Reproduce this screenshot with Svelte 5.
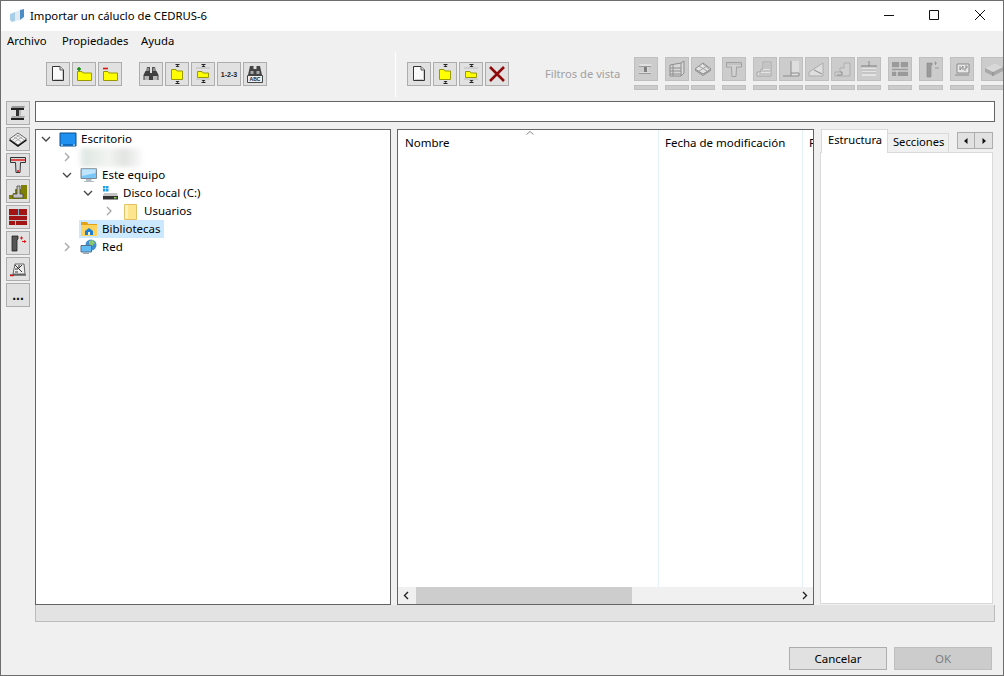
<script>
  const treeRows = [
    { label: "Escritorio", level: 0, open: true, icon: "desktop" },
    { label: "", level: 1, closed: true, icon: "blur" },
    { label: "Este equipo", level: 1, open: true, icon: "pc" },
    { label: "Disco local (C:)", level: 2, open: true, icon: "disk" },
    { label: "Usuarios", level: 3, closed: true, icon: "folder" },
    { label: "Bibliotecas", level: 1, icon: "library", selected: true },
    { label: "Red", level: 1, closed: true, icon: "network" }
  ]

  // grouped the way the disabled view filters sit in the toolbar
  const filterGroups = [
    ["beamOff"],
    ["frame", "slab"],
    ["tee"],
    ["stairs", "wall", "ramp", "step", "layers"],
    ["bricks"],
    ["column"],
    ["detail"],
    ["block"]
  ]
</script>

{#snippet yellowFolder(x, y, w, h)}
  <path d="M{x + 0.5} {y + h - 0.5}V{y + 0.5}H{x + 5}l1 1.5H{x + w - 0.5}V{y + h - 0.5}Z" fill="#ffff00" stroke="#9a9a00" />
{/snippet}

{#snippet page()}
  <path d="M5.5 3.5H13L16.5 7V17.5H5.5Z" fill="#fafafa" stroke="#333" />
  <path d="M13 3.5V7H16.5" fill="#ddd" stroke="#555" />
  <path d="M7 16.5H15.5V8" fill="none" stroke="#ccc" />
{/snippet}

{#snippet binoculars()}
  <path d="M6 9L7 4H10V9ZM12 9V4H15L16 9Z" fill="#555" />
  <path d="M3.5 17V12L5.5 8H10V10H12V8H16.5L18.5 12V17Z" fill="#3f3f3f" />
  <path d="M4.5 13H9V17H4.500ZM13 13H17.500V17H13Z" fill="#b5b5b5" />
  <path d="M7 5H9V8H7ZM13 5H15V8H13Z" fill="#8a8a8a" />
{/snippet}

{#snippet arrowsV(top, bottom)}
  <path d="M9.500 {top + 0.5}H13.500M9.500 {bottom - 0.5}H13.500" stroke="#222" fill="none" />
  <path d="M9.500 {top + 3}H13.500L11.500 {top + 1}Z" fill="#222" />
  <path d="M9.500 {bottom - 3}H13.500L11.500 {bottom - 1}Z" fill="#222" />
{/snippet}

{#snippet glyph(name)}
  <svg class="glyph" width="22" height="22" viewBox="0 0 22 22">
    {#if name === "beam"}
      <path d="M5 4H18L17 6H4Z" fill="#999" />
      <path d="M4 6H17V8H4Z" fill="#222" />
      <path d="M9 8H12V14H9Z" fill="#333" />
      <path d="M12 8H14V13.500H12Z" fill="#bbb" />
      <path d="M5 14H18L17 16H4Z" fill="#aaa" />
      <path d="M4 16H17V18H4Z" fill="#222" />
    {:else if name === "beamOff"}
      <path d="M5 6H17L16 8H4Z" fill="#e0e0e0" />
      <path d="M4 8H16V9H4Z" fill="#9a9a9a" />
      <path d="M9 9H12V14H9Z" fill="#7e7e7e" />
      <path d="M12 9H13.500V13H12Z" fill="#dadada" />
      <path d="M5 14H17L16 15H4Z" fill="#dcdcdc" />
      <path d="M4 15H16V16H4Z" fill="#9a9a9a" />
    {:else if name === "plate"}
      <path d="M2.500 11L11 5L19.500 11L11 17Z" fill="#f4f4f4" stroke="#666" />
      <path d="M6.500 8.500L14.500 14M9 6.500L17 12M13 6.500L5 12.500M15.500 8.500L7.500 14" stroke="#aaa" fill="none" />
      <path d="M2.500 12L11 18L19.500 12" stroke="#111" stroke-width="1.500" fill="none" />
    {:else if name === "teeRed"}
      <path d="M3.500 3.500H18.500V8.500H13.500L13 18.500H9L8.500 8.500H3.500Z" fill="#d8d8d8" stroke="#333" />
      <path d="M4 6H18" stroke="#e01010" stroke-width="1.400" />
      <path d="M10 17H12" stroke="#e01010" stroke-width="1.400" />
    {:else if name === "footing"}
      <path d="M2 19V15H6V13H8V9H14V5H20V19Z" fill="#808000" />
      <path d="M10 6H13V14H16V18H6V14H10Z" fill="#c4c4c4" stroke="#444" stroke-width="0.800" />
    {:else if name === "brick"}
      <path d="M2 3H20V19H2Z" fill="#a31414" />
      <path d="M2 9.500H20M2 14.500H20M8.500 14.500V19" stroke="#b8c4c8" fill="none" />
      <path d="M11.500 3V9" stroke="#7fb0c8" />
    {:else if name === "colRed"}
      <path d="M5 4H11V7L10 8V19H5Z" fill="#555" stroke="#222" stroke-width="0.800" />
      <path d="M13 6H16M14.500 4.500V7.500M15 9.500H19" stroke="#e01010" fill="none" />
      <path d="M17 8L19.500 9.500L17 11Z" fill="#e01010" />
    {:else if name === "slope"}
      <path d="M6 16L8 6H17L18 16Z" fill="#eee" stroke="#444" stroke-width="0.800" />
      <path d="M8 7L15 14M15 7L11 11M12 7V10M8 11H11M8 14H11" stroke="#333" fill="none" />
      <path d="M3 17H19" stroke="#222" />
      <path d="M3 17.500H7" stroke="#e01010" stroke-width="1.400" />
    {:else if name === "dots"}
      <text x="11" y="15.500" text-anchor="middle" class="dots">...</text>
    {:else if name === "frame"}
      <path d="M4 7L15 5V18H4ZM15 5L18 3V15L15 18" fill="#d8d8d8" stroke="#8e8e8e" />
      <path d="M4 10H15M4 13H15M4 16H15M7 7V18" stroke="#8e8e8e" fill="none" />
    {:else if name === "slab"}
      <path d="M3 11L11 5L19 11L11 16Z" fill="#e2e2e2" stroke="#8c8c8c" />
      <path d="M7 8L15 13M11 6L17 11M15 8L7 13" stroke="#a2a2a2" fill="none" />
      <path d="M3 12L11 17.500L19 12" stroke="#8c8c8c" fill="none" />
    {:else if name === "tee"}
      <path d="M3.500 4.500H18.500V9H13.500L13 18.500H9L8.500 9H3.500Z" fill="#d2d2d2" stroke="#a0a0a0" />
      <path d="M4 6H18" stroke="#b2b2b2" />
    {:else if name === "stairs"}
      <path d="M3 18V14H7V11H9V4H17V18Z" fill="#e4e4e4" stroke="#a4a4a4" />
      <path d="M10 6H16M10 8H16M10 10H16M8 13H16M5 16H16" stroke="#a4a4a4" fill="none" />
    {:else if name === "wall"}
      <path d="M11 3H19V18H11Z" fill="#dedede" />
      <path d="M11 3V18M3 18H19V15H11" stroke="#8c8c8c" fill="none" />
    {:else if name === "ramp"}
      <path d="M3 18V14L17 5V18Z" fill="#dedede" stroke="#adadad" />
      <path d="M8 12L16 16" stroke="#8c8c8c" />
    {:else if name === "step"}
      <path d="M3 18V14H8V10H12V5H18V18Z" fill="#d0d0d0" stroke="#adadad" />
      <path d="M8 14H10V17H5" stroke="#8e8e8e" fill="none" />
    {:else if name === "layers"}
      <path d="M11 3V8" stroke="#8c8c8c" />
      <path d="M3 8H19" stroke="#7c7c7c" />
      <path d="M4 10H18V18H4Z" fill="#e4e4e4" />
      <path d="M4 12H18M4 15H18" stroke="#a6a6a6" />
    {:else if name === "bricks"}
      <path d="M3 4H19V18H3Z" fill="#9a9a9a" />
      <path d="M3 10H19M3 13H19M11 4V10M8 13V18" stroke="#e8e8e8" fill="none" />
    {:else if name === "column"}
      <path d="M7 5H12V7L11 8V19H7Z" fill="#9a9a9a" stroke="#888" stroke-width="0.600" />
      <path d="M14 5H17M15.500 3.500V7M15 10H19" stroke="#9c9c9c" fill="none" />
    {:else if name === "detail"}
      <path d="M6 6H18V15H6Z" fill="#e8e8e8" stroke="#8a8a8a" />
      <path d="M9 8V12L12 8V12M14 8H16V10H14V13" stroke="#8a8a8a" fill="none" />
      <path d="M4 17H18" stroke="#8a8a8a" />
    {:else if name === "block"}
      <path d="M3 10L13 5L21 9V13L11 18L3 14Z" fill="#a8a8a8" />
      <path d="M3 10L11 14L21 9L13 5Z" fill="#d8d8d8" />
      <path d="M11 14V18" stroke="#8a8a8a" />
    {/if}
  </svg>
{/snippet}

{#snippet treeIcon(name)}
  <svg class="tree-icon" width="18" height="18" viewBox="0 0 18 18">
    {#if name === "desktop"}
      <path d="M1 3H17V16H1Z" fill="#1e90f0" stroke="#0b4f8e" />
      <path d="M2 14H16V15H2Z" fill="#0b6bc2" />
      <path d="M2 15H4M14 15H16" stroke="#dff" />
    {:else if name === "pc"}
      <path d="M1 2.500H16.500V12.500H1Z" fill="#7ac6f6" stroke="#7d8a96" />
      <path d="M2 3.500H15.500V7L2 10Z" fill="#bfe4fb" />
      <path d="M6 13H11.500V15H14V16H4V15H6Z" fill="#b5bdc4" />
    {:else if name === "disk"}
      <path d="M2 2H4.500V4.500H2ZM5 2H7.500V4.500H5ZM2 5H4.500V7.500H2ZM5 5H7.500V7.500H5Z" fill="#1ea0ec" />
      <path d="M3 9H16L17 12H2Z" fill="#c6c6c6" />
      <path d="M2 12H17V15.500H2Z" fill="#333" />
      <path d="M13 13H15.500V14.500H13Z" fill="#7fd34e" />
    {:else if name === "folder"}
      <path d="M2.500 2.500H14.500V17.500H2.500Z" fill="#fde58e" stroke="#e2c266" />
      <path d="M3 3H6V16L3 17Z" fill="#fff2bc" />
    {:else if name === "library"}
      <path d="M1 2H7L8.500 4H17V15H1Z" fill="#e3a21a" />
      <path d="M1 5H17V16H1Z" fill="#fcd35c" />
      <path d="M5 11L9 8L13 11V15H5Z" fill="#1d7fd2" />
      <path d="M8 12H10V15H8Z" fill="#fff0b8" />
    {:else if name === "network"}
      <path d="M11 1.500A5.500 5.500 0 1 1 11 12.500A5.500 5.500 0 1 1 11 1.500Z" fill="#3f8fd2" />
      <path d="M9 3L13 2L15 5L12 8L9 6Z" fill="#8cc86a" />
      <path d="M1 7.500H11.500V14H1Z" fill="#5fbcf5" stroke="#5b7186" />
      <path d="M4 14.500H9V16H3V15Z" fill="#9aa6b1" />
    {/if}
  </svg>
{/snippet}

<div class="window">
  <header class="titlebar">
    <svg class="app-icon" width="16" height="16" viewBox="0 0 16 16">
      <path d="M1 6L6 4V13L3 14L1 12Z" fill="#a9cfe8" />
      <path d="M6 4L11 2V12L6 13Z" fill="#dfeaf3" />
      <path d="M11 2L15 1V9L11 12Z" fill="#4d8fc4" />
    </svg>
    <span class="title">Importar un cáluclo de CEDRUS-6</span>
    <div class="win-controls">
      <svg width="45" height="30" viewBox="0 0 45 30"><path d="M17 14.500H27" stroke="#111" fill="none" /></svg>
      <svg width="45" height="30" viewBox="0 0 45 30"><path d="M17.500 9.500H26.500V18.500H17.500Z" stroke="#111" fill="none" /></svg>
      <svg width="45" height="30" viewBox="0 0 45 30"><path d="M18 9L28 19M28 9L18 19" stroke="#111" fill="none" /></svg>
    </div>
  </header>

  <nav class="menubar">
    <span class="menu-archivo">Archivo</span>
    <span class="menu-propiedades">Propiedades</span>
    <span>Ayuda</span>
  </nav>

  <div class="toolbars">
    <div class="tools first">
      <div class="group">
        <button class="tool">
          <svg width="22" height="22" viewBox="0 0 22 22">{@render page()}</svg>
        </button>
        <button class="tool">
          <svg width="22" height="22" viewBox="0 0 22 22">
            <path d="M4 6H8M6 4V8" stroke="#0a8a0a" stroke-width="1.400" />
            {@render yellowFolder(4, 8, 15, 10)}
          </svg>
        </button>
        <button class="tool">
          <svg width="22" height="22" viewBox="0 0 22 22">
            <path d="M4 5.500H9" stroke="#e01010" stroke-width="1.600" />
            {@render yellowFolder(4, 8, 15, 10)}
          </svg>
        </button>
      </div>
      <div class="group">
        <button class="tool">
          <svg width="22" height="22" viewBox="0 0 22 22">{@render binoculars()}</svg>
        </button>
        <button class="tool">
          <svg width="22" height="22" viewBox="0 0 22 22">
            {@render yellowFolder(5, 6, 12, 11)}
            {@render arrowsV(1, 21)}
          </svg>
        </button>
        <button class="tool">
          <svg width="22" height="22" viewBox="0 0 22 22">
            <path d="M4 5H18M4 16H18" stroke="#bbb" />
            {@render yellowFolder(5, 8, 12, 7)}
            {@render arrowsV(1, 20)}
          </svg>
        </button>
        <button class="tool">
          <svg width="22" height="22" viewBox="0 0 22 22">
            <text x="11" y="13.500" text-anchor="middle" class="tiny">1-2-3</text>
          </svg>
        </button>
        <button class="tool">
          <svg width="22" height="22" viewBox="0 0 22 22">
            <path d="M6 3H9.500V6H12.500V3H16L18 12H4Z" fill="#444" />
            <path d="M6.500 8H9.500V11H6.500ZM12.500 8H15.500V11H12.500Z" fill="#aaa" />
            <path d="M3.500 12.500H18.500V19.500H3.500Z" fill="#eee" stroke="#444" />
            <text x="11" y="18" text-anchor="middle" class="tiny abc">ABC</text>
          </svg>
        </button>
      </div>
    </div>

    <div class="separator"></div>

    <div class="group second">
      <button class="tool">
        <svg width="22" height="22" viewBox="0 0 22 22">{@render page()}</svg>
      </button>
      <button class="tool">
        <svg width="22" height="22" viewBox="0 0 22 22">
          {@render yellowFolder(5, 6, 12, 11)}
          {@render arrowsV(1, 21)}
        </svg>
      </button>
      <button class="tool">
        <svg width="22" height="22" viewBox="0 0 22 22">
          <path d="M4 5H18M4 16H18" stroke="#bbb" />
          {@render yellowFolder(5, 8, 12, 7)}
          {@render arrowsV(1, 20)}
        </svg>
      </button>
      <button class="tool">
        <svg width="22" height="22" viewBox="0 0 22 22">
          <path d="M4 4L18 18M18 4L4 18" stroke="#8f0a0a" stroke-width="2.600" />
        </svg>
      </button>
    </div>

    <span class="filters-label">Filtros de vista</span>

    <div class="filters">
      {#each filterGroups as group}
        <div class="filter-group">
          {#each group as name}
            <div class="filter">
              <div class="filter-btn">{@render glyph(name)}</div>
              <div class="filter-bar"></div>
            </div>
          {/each}
        </div>
      {/each}
    </div>
  </div>

  <div class="main">
    <aside class="sidebar">
      {#each ["beam", "plate", "teeRed", "footing", "brick", "colRed", "slope", "dots"] as name}
        <button class="tool">{@render glyph(name)}</button>
      {/each}
    </aside>

    <div class="content">
      <div class="address"></div>

      <div class="panes">
        <div class="pane tree">
          {#each treeRows as row}
            <div class="tree-row" style="padding-left: {row.level * 21 + 5}px">
              <span class="twisty">
                {#if row.open}
                  <svg width="10" height="10" viewBox="0 0 10 10"><path d="M1 3L5 7L9 3" fill="none" stroke="#444" stroke-width="1.300" /></svg>
                {:else if row.closed}
                  <svg width="10" height="10" viewBox="0 0 10 10"><path d="M3 1L7 5L3 9" fill="none" stroke="#a6a6a6" stroke-width="1.300" /></svg>
                {/if}
              </span>
              {#if row.icon === "blur"}
                <div class="blurred"></div>
              {:else}
                <div class="tree-item" class:selected={row.selected}>
                  {@render treeIcon(row.icon)}
                  <span>{row.label}</span>
                </div>
              {/if}
            </div>
          {/each}
        </div>

        <div class="pane list">
          <div class="columns">
            <div class="col col-name">
              <svg class="sort" width="8" height="4" viewBox="0 0 8 4"><path d="M0.500 3.500L4 0.500L7.500 3.500" fill="none" stroke="#888" /></svg>
              <span>Nombre</span>
            </div>
            <div class="col col-date"><span>Fecha de modificación</span></div>
            <div class="col col-rest"><span>F</span></div>
          </div>
          <div class="hscroll">
            <svg class="arrow-left" width="17" height="17" viewBox="0 0 17 17"><path d="M10 5L6.500 8.500L10 12" fill="none" stroke="#222" stroke-width="1.400" /></svg>
            <div class="track"><div class="thumb"></div></div>
            <svg width="17" height="17" viewBox="0 0 17 17"><path d="M7 5L10.500 8.500L7 12" fill="none" stroke="#222" stroke-width="1.400" /></svg>
          </div>
        </div>

        <div class="tabs">
          <div class="tab-strip">
            <div class="tab active">Estructura</div>
            <div class="tab">Secciones</div>
            <div class="spin">
              <button class="spin-btn"><svg width="6" height="8" viewBox="0 0 6 8"><path d="M4.500 1V7L1 4Z" fill="#111" /></svg></button>
              <button class="spin-btn"><svg width="6" height="8" viewBox="0 0 6 8"><path d="M1.500 1V7L5 4Z" fill="#111" /></svg></button>
            </div>
          </div>
          <div class="tab-body"></div>
        </div>
      </div>

      <div class="status"></div>
    </div>
  </div>

  <footer class="footer">
    <button class="action">Cancelar</button>
    <button class="action" disabled>OK</button>
  </footer>
</div>

<style>
  :global(body) {
    margin: 0;
    background: #f0f0f0;
  }

  .window {
    width: 1004px;
    height: 676px;
    box-sizing: border-box;
    border: 1px solid #6d6d6d;
    background: #f0f0f0;
    display: flex;
    flex-direction: column;
    overflow: hidden;
    font-family: "Noto Sans", "Open Sans", sans-serif;
    font-size: 11.5px;
    color: #000;
  }

  .titlebar {
    height: 30px;
    flex: none;
    background: #fff;
    display: flex;
    align-items: center;
    padding-left: 8px;
  }

  .app-icon {
    margin-right: 5px;
  }

  .title {
    font-size: 11.3px;
    padding-bottom: 2px;
  }

  .win-controls {
    margin-left: auto;
    display: flex;
    margin-right: 1px;
  }

  .menubar {
    height: 20px;
    flex: none;
    display: flex;
    align-items: center;
    padding: 0 0 2px 6px;
    box-sizing: border-box;
    font-size: 11.3px;
  }

  .menu-archivo {
    width: 55px;
  }

  .menu-propiedades {
    width: 79px;
  }

  .toolbars {
    height: 50px;
    flex: none;
    display: flex;
    align-items: flex-start;
  }

  .tools.first {
    display: flex;
    gap: 17px;
    margin: 11px 0 0 45px;
    width: 349px;
    flex: none;
  }

  .group {
    display: flex;
    gap: 2px;
  }

  .second {
    margin: 11px 0 0 11px;
  }

  .separator {
    width: 1px;
    height: 45px;
    margin-top: 1px;
    background: #999;
    border-right: 1px solid #fff;
  }

  .tool {
    width: 24px;
    height: 24px;
    box-sizing: border-box;
    padding: 0;
    border: 1px solid #adadad;
    background: #e1e1e1;
    display: flex;
    align-items: center;
    justify-content: center;
    font: inherit;
    flex: none;
  }

  .tool svg {
    display: block;
  }

  .tiny {
    font-family: "Liberation Sans", sans-serif;
    font-size: 7px;
    font-weight: 700;
    fill: #222;
  }

  .abc {
    font-size: 5px;
  }

  .dots {
    font-family: "Liberation Sans", sans-serif;
    font-size: 14px;
    font-weight: 700;
    fill: #111;
  }

  .filters-label {
    width: 89px;
    margin: 15px 0 0 36px;
    flex: none;
    color: #a0a0a0;
    font-size: 11.2px;
    line-height: 16px;
  }

  .filters {
    display: flex;
    gap: 7px;
    margin-top: 6px;
    flex: none;
  }

  .filter-group {
    display: flex;
    gap: 2px;
  }

  .filter {
    display: flex;
    flex-direction: column;
    gap: 4px;
  }

  .filter-btn {
    width: 24px;
    height: 24px;
    box-sizing: border-box;
    border: 1px solid #bfbfbf;
    background: #cccccc;
    display: flex;
    align-items: center;
    justify-content: center;
  }

  .filter-bar {
    width: 24px;
    height: 5px;
    box-sizing: border-box;
    border: 1px solid #bfbfbf;
    background: #cccccc;
  }

  .main {
    display: flex;
    flex: none;
    padding-left: 5px;
    gap: 5px;
  }

  .sidebar {
    display: flex;
    flex-direction: column;
    gap: 2px;
  }

  .content {
    width: 960px;
    display: flex;
    flex-direction: column;
  }

  .address {
    height: 21px;
    box-sizing: border-box;
    border: 1px solid #646464;
    background: #fff;
    margin-bottom: 7px;
  }

  .panes {
    display: flex;
    gap: 6px;
    height: 476px;
  }

  .pane {
    box-sizing: border-box;
    border: 1px solid #646464;
    background: #fff;
  }

  .tree {
    width: 356px;
  }

  .tree-row {
    height: 18px;
    display: flex;
    align-items: center;
  }

  .twisty {
    width: 10px;
    height: 10px;
    margin-right: 7px;
    flex: none;
    display: flex;
  }

  .tree-item {
    display: flex;
    align-items: center;
    height: 18px;
    gap: 4px;
    padding: 0 3px 0 1px;
  }

  .tree-item span {
    padding-bottom: 2px;
  }

  .tree-item.selected {
    background: #cce8ff;
  }

  .tree-icon {
    flex: none;
  }

  .blurred {
    width: 65px;
    height: 19px;
    margin-left: -2px;
    background: linear-gradient(90deg, #fff, #dfe8e4 12%, #e9eeea 30%, #f2f4f2 50%, #e2e4e2 72%, #eef0ee 88%, #fafafa);
    filter: blur(2px);
  }

  .list {
    width: 417px;
    display: flex;
    flex-direction: column;
  }

  .columns {
    flex: 1;
    display: flex;
    overflow: hidden;
  }

  .col {
    box-sizing: border-box;
    padding: 4px 0 0 7px;
    line-height: 18px;
    border-right: 1px solid #e5f1fb;
    flex: none;
    white-space: nowrap;
    overflow: hidden;
  }

  .col-name {
    width: 261px;
    position: relative;
  }

  .sort {
    position: absolute;
    top: 1px;
    left: 128px;
  }

  .col-date {
    width: 144px;
    padding-left: 6px;
  }

  .col-rest {
    width: 10px;
    padding-left: 6px;
    border-right: none;
  }

  .hscroll {
    height: 17px;
    flex: none;
    display: flex;
    background: #f0f0f0;
  }

  .arrow-left {
    margin-right: 1px;
  }

  .track {
    flex: 1;
  }

  .thumb {
    width: 216px;
    height: 17px;
    background: #cdcdcd;
  }

  .tabs {
    width: 173px;
    display: flex;
    flex-direction: column;
    height: 475px;
    font-size: 11.2px;
  }

  .tab-strip {
    height: 23px;
    flex: none;
    display: flex;
    align-items: flex-end;
    padding-left: 1px;
  }

  .tab {
    box-sizing: border-box;
    height: 19px;
    width: 62px;
    padding-left: 5px;
    border: 1px solid #d9d9d9;
    border-bottom: none;
    border-left: none;
    background: #f0f0f0;
    line-height: 16px;
    white-space: nowrap;
  }

  .tab.active {
    width: 68px;
    height: 24px;
    margin-bottom: -1px;
    position: relative;
    z-index: 1;
    padding: 1px 0 0 6px;
    line-height: 18px;
    background: #fff;
    border-left: 1px solid #d9d9d9;
  }

  .spin {
    display: flex;
    margin: 0 0 3px 8px;
  }

  .spin-btn {
    width: 18px;
    height: 17px;
    box-sizing: border-box;
    padding: 0;
    border: 1px solid #adadad;
    background: #e1e1e1;
    display: flex;
    align-items: center;
    justify-content: center;
  }

  .spin-btn + .spin-btn {
    border-left: none;
  }

  .tab-body {
    flex: 1;
    box-sizing: border-box;
    background: #fff;
    border: 1px solid #d9d9d9;
  }

  .status {
    height: 17px;
    box-sizing: border-box;
    border: 1px solid #bcbcbc;
    border-top: none;
    background: #e3e3e3;
  }

  .footer {
    display: flex;
    gap: 7px;
    margin: 25px 0 0 788px;
  }

  .action {
    width: 98px;
    height: 23px;
    box-sizing: border-box;
    padding: 0;
    border: 1px solid #adadad;
    background: #e1e1e1;
    font: inherit;
    color: #000;
  }

  .action:disabled {
    background: #cccccc;
    border-color: #bfbfbf;
    color: #7f7f7f;
  }
</style>
